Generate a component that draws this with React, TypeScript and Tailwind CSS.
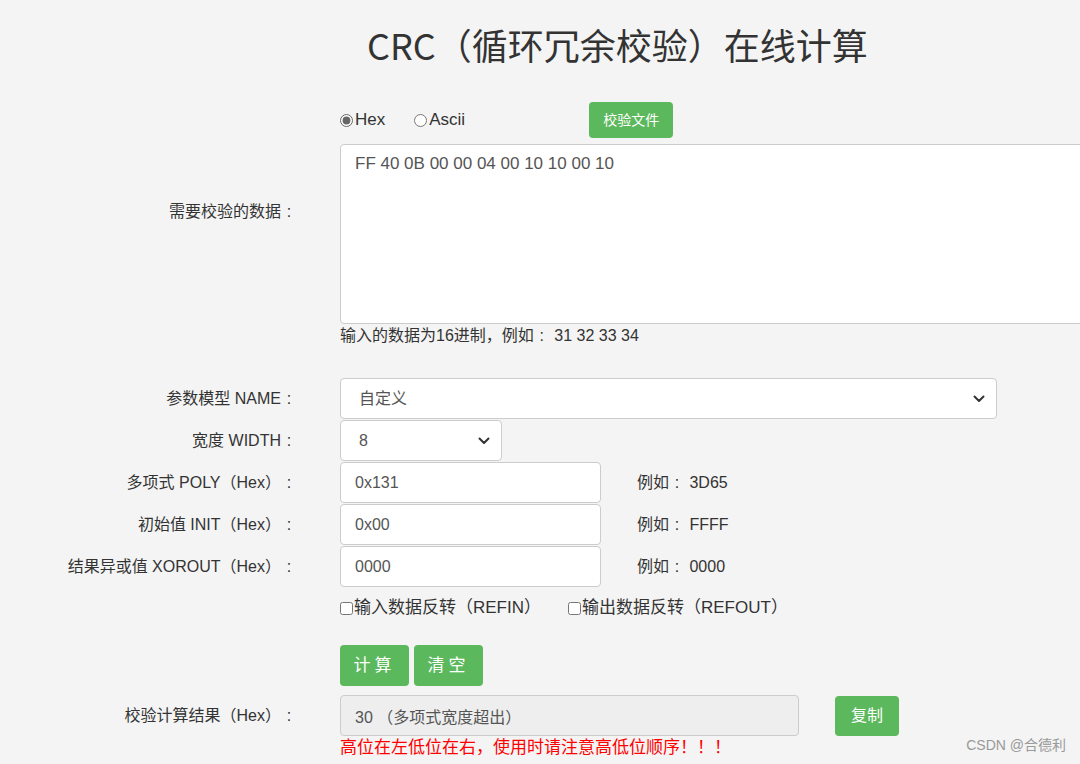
import React from "react";

const sans = "font-['Liberation_Sans','Noto_Sans_CJK_SC',sans-serif]";

// colon centred in a full-width box, as the original page's font draws it
function Colon() {
  return <span className="inline-block w-[16px] text-center">:</span>;
}

function Chevron() {
  return (
    <svg width="12" height="8" viewBox="0 0 12 8" className="pointer-events-none absolute right-[12px] top-1/2 -translate-y-1/2">
      <path d="M1.5 1.5 6 6l4.5-4.5" fill="none" stroke="#333" strokeWidth="2" strokeLinecap="round" strokeLinejoin="round" />
    </svg>
  );
}

function Row({ label, children }: { label: string; children: React.ReactNode }) {
  return (
    <div className="flex items-center">
      <div className="w-[297px] shrink-0 text-right text-[16px] text-[#333]">
        {label}
        <Colon />
      </div>
      <div className="ml-[43px] flex items-center">{children}</div>
    </div>
  );
}

function Field({ value, example }: { value: string; example: string }) {
  return (
    <>
      <input
        defaultValue={value}
        className="h-[41px] w-[261px] rounded-[4px] border border-[#ccc] bg-white px-[14px] text-[16px] text-[#555] outline-none"
      />
      <span className="ml-[36px] text-[16px] text-[#333]">
        例如<Colon /> {example}
      </span>
    </>
  );
}

export default function App() {
  return (
    <div className={`relative h-[764px] w-full overflow-hidden bg-[#f4f4f4] [text-spacing-trim:space-all] ${sans}`}>
      <h1 className="pl-[367px] pt-[21px] font-['Noto_Sans_CJK_SC',sans-serif] text-[36px] leading-[46px] text-[#333]">
        CRC（循环冗余校验）在线计算
      </h1>

      {/* data input */}
      <div className="mt-[35px] flex">
        <div className="w-[297px] shrink-0 pt-[98px] text-right text-[16px] text-[#333]">
          需要校验的数据<Colon />
        </div>
        <div className="ml-[43px] flex-1">
          <div className="flex h-[36px] items-center text-[17px] text-[#333]">
            <label className="flex items-center">
              <input type="radio" name="fmt" defaultChecked className="m-0 h-[13px] w-[13px] accent-[#666]" />
              <span className="ml-[2px]">Hex</span>
            </label>
            <label className="ml-[29px] flex items-center">
              <input type="radio" name="fmt" className="m-0 h-[13px] w-[13px]" />
              <span className="ml-[2px]">Ascii</span>
            </label>
            <button className="ml-[124px] h-[36px] w-[84px] rounded-[4px] bg-[#5cb85c] text-[14px] text-white">
              校验文件
            </button>
          </div>
          <textarea
            defaultValue="FF 40 0B 00 00 04 00 10 10 00 10"
            className="mt-[6px] block h-[180px] w-[760px] resize-none rounded-[4px] border border-[#ccc] bg-white px-[14px] py-[6px] text-[17px] text-[#555] outline-none"
          />
          <p className="mt-[1px] text-[16px] leading-[22px] text-[#333]">
            输入的数据为16进制，例如<Colon /> 31 32 33 34
          </p>
        </div>
      </div>

      <div className="mt-[31px] flex flex-col gap-[1px]">
        <Row label="参数模型 NAME">
          <div className="relative">
            <select className="h-[41px] w-[657px] appearance-none rounded-[4px] border border-[#ccc] bg-white pl-[18px] text-[16px] text-[#555] outline-none">
              <option>自定义</option>
            </select>
            <Chevron />
          </div>
        </Row>
        <Row label="宽度 WIDTH">
          <div className="relative">
            <select className="h-[41px] w-[162px] appearance-none rounded-[4px] border border-[#ccc] bg-white pl-[18px] text-[16px] text-[#555] outline-none">
              <option>8</option>
            </select>
            <Chevron />
          </div>
        </Row>
        <Row label="多项式 POLY（Hex）">
          <Field value="0x131" example="3D65" />
        </Row>
        <Row label="初始值 INIT（Hex）">
          <Field value="0x00" example="FFFF" />
        </Row>
        <Row label="结果异或值 XOROUT（Hex）">
          <Field value="0000" example="0000" />
        </Row>
      </div>

      <div className="ml-[340px] mt-[10px] flex items-center text-[17px] leading-[22px] text-[#333]">
        <label className="flex items-center">
          <input type="checkbox" className="m-0 h-[13px] w-[13px]" />
          <span className="ml-[1px]">输入数据反转（REFIN）</span>
        </label>
        <label className="ml-[27px] flex items-center">
          <input type="checkbox" className="m-0 h-[13px] w-[13px]" />
          <span className="ml-[1px]">输出数据反转（REFOUT）</span>
        </label>
      </div>

      <div className="ml-[340px] mt-[26px] flex gap-[5px]">
        <button className="h-[41px] w-[69px] rounded-[4px] bg-[#5cb85c] text-[17px] tracking-[4px] text-white">计算</button>
        <button className="h-[41px] w-[69px] rounded-[4px] bg-[#5cb85c] text-[17px] tracking-[4px] text-white">清空</button>
      </div>

      <div className="mt-[9px]">
        <Row label="校验计算结果（Hex）">
          <input
            readOnly
            value="30 （多项式宽度超出）"
            className="h-[41px] w-[459px] rounded-[4px] border border-[#ccc] bg-[#eee] px-[14px] text-[16px] text-[#555] outline-none"
          />
          <button className="ml-[36px] h-[40px] w-[64px] rounded-[4px] bg-[#5cb85c] text-[16px] text-white">复制</button>
        </Row>
      </div>
      <p className="ml-[340px] mt-[1px] text-[17px] leading-[22px] text-[#f00]">高位在左低位在右，使用时请注意高低位顺序！！！</p>

      <span className="absolute bottom-[8px] right-[14px] text-[14px] text-[#999]">CSDN @合德利</span>
    </div>
  );
}
